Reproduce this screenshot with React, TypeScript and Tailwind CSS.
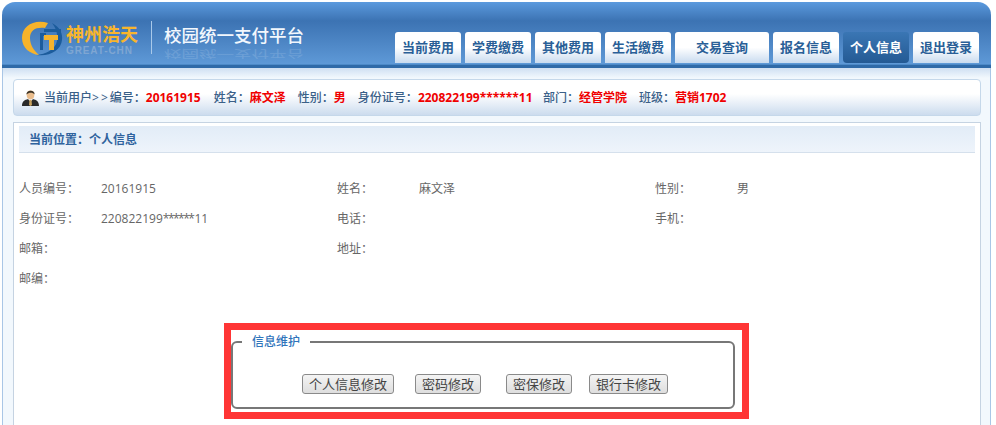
import React from "react";

const tabs = [
  { t: "当前费用", w: "w-[66px]" },
  { t: "学费缴费", w: "w-[66px]" },
  { t: "其他费用", w: "w-[66px]" },
  { t: "生活缴费", w: "w-[66px]" },
  { t: "交易查询", w: "w-[94px]" },
  { t: "报名信息", w: "w-[66px]" },
  { t: "个人信息", w: "w-[66px]", active: true },
  { t: "退出登录", w: "w-[66px]" },
];

const Label = ({ children }: { children: React.ReactNode }) => <span className="text-[#3a6088]">{children}</span>;
const Val = ({ children, w }: { children: React.ReactNode; w: string }) => (
  <span className={`text-[#f00000] font-bold ${w}`}>{children}</span>
);

const idNo = (
  <>
    220822199<span className="tracking-[-1.5px]">******</span>
    <span className="ml-[1px]">11</span>
  </>
);

const rows: React.ReactNode[][] = [
  ["人员编号\uFF1A", "20161915", "姓名\uFF1A", "麻文泽", "性别\uFF1A", "男"],
  ["身份证号\uFF1A", idNo, "电话\uFF1A", "", "手机\uFF1A", ""],
  ["邮箱\uFF1A", "", "地址\uFF1A", "", "", ""],
  ["邮编\uFF1A", "", "", "", "", ""],
];

const Logo = () => (
  <svg width="41" height="37" viewBox="0 0 41 37" className="shrink-0">
    <path d="M30 3 C38 7 41 14 40 20 C39 30 28 37 14 35 C24 34 33 30 35 21 C36 14 34 8 30 3 Z" fill="#1c5c9c" />
    <path d="M22 9 H39 V12 H22 Z" fill="#1c5c9c" />
    <path d="M18 13 V30 H21 V16 H24 V13 Z" fill="#1c5c9c" />
    <path d="M26 3 C12 -1 0 6 0 18 C0 28 8 34 17 35 C11 30 8 24 8 18 C8 10 14 7 23 8 Z" fill="#f6b32b" />
    <path d="M22 15 H36 V20 H32 V30 H27 V20 H22 Z" fill="#f6b32b" />
  </svg>
);

const Avatar = () => (
  <svg width="17" height="17" viewBox="0 0 17 17" className="shrink-0">
    <path d="M0 17 C0 12 3 11 6 10 L8.5 13 L11 10 C14 11 17 12 17 17 Z" fill="#2a2a2a" />
    <path d="M7.5 11 H9.5 L10 16 L8.5 17 L7 16 Z" fill="#c9a25f" />
    <ellipse cx="8.5" cy="6" rx="3.8" ry="4.4" fill="#e9bc8c" />
    <path d="M4.5 5.5 C4 1 13 0 12.6 5.5 C11 3.5 7 3 4.5 5.5 Z" fill="#3a3327" />
  </svg>
);

export default function App() {
  return (
    <div className="h-[425px] w-[996px] overflow-hidden bg-white text-[12px] text-[#333] font-['Open_Sans','Noto_Sans_CJK_SC',sans-serif]">
      <div className="ml-[2px] w-[989px] pt-[2px]">
        <header className="flex h-[66px] items-start rounded-t-[13px] border-b-[3px] border-[#2f6aa8] bg-gradient-to-b from-[#5b9ade] via-[#3c73b3] via-30% to-[#5f9ad8] shadow-[inset_0_-1px_0_#4d8ac8]">
          <div className="flex w-[393px] shrink-0 pl-[20px] pt-[18px]">
            <Logo />
            <div className="ml-[3px] flex w-[74px] shrink-0 flex-col items-start pt-[2px] leading-none">
              <span className="whitespace-nowrap text-[18px] leading-[22px] font-bold text-[#f8b52c] font-['Noto_Sans_CJK_SC',sans-serif]">神州浩天</span>
              <span className="mt-[1px] whitespace-nowrap text-[10px] leading-[11px] font-bold tracking-[0.9px] text-[#7fa6d2] font-['Liberation_Sans',sans-serif]">GREAT-CHN</span>
            </div>
            <div className="ml-[11px] mr-[12px] mt-[1px] h-[33px] w-[1px] shrink-0 bg-[#a9c9ea]" />
            <div className="relative mt-[3px] h-[24px] shrink-0">
              <span className="block whitespace-nowrap text-[17.5px] leading-[24px] font-medium text-[#f2f7fd] font-['Noto_Sans_CJK_SC',sans-serif]">校园统一支付平台</span>
              <span aria-hidden className="absolute left-0 top-0 block origin-bottom -scale-y-60 whitespace-nowrap text-[17.5px] leading-[24px] text-[#eaf3fc] opacity-15 font-['Noto_Sans_CJK_SC',sans-serif]">校园统一支付平台</span>
            </div>
          </div>
          <nav className="mt-[30px] flex gap-[4px]">
            {tabs.map((x) => (
              <div
                key={x.t}
                className={`flex h-[31px] ${x.w} items-center justify-center rounded-t-[3px] pt-[1px] text-[13px] font-bold ${
                  x.active
                    ? "rounded-[4px] bg-gradient-to-b from-[#3a76b4] to-[#245a94] text-white"
                    : "bg-gradient-to-b from-white via-white to-[#c9dbef] text-[#2a5f97]"
                }`}
              >
                {x.t}
              </div>
            ))}
          </nav>
        </header>
        <main className="h-[357px] border-x border-[#a9c6e6] bg-gradient-to-b from-[#cfdff2] via-[#f2f8fd] via-[10px] to-[#f2f8fd] pl-[10px] pr-[9px] pt-[11px]">
          <div className="flex h-[37px] items-center rounded-[4px] border border-[#c5d8ea] bg-gradient-to-b from-white via-white via-40% to-[#ccdcee] pl-[8px] text-[12px] font-medium">
            <Avatar />
            <div className="ml-[5px] flex items-center whitespace-nowrap">
              <Label>当前用户<span className="tracking-[2px]">&gt;&gt;</span>编号{"\uFF1A"}</Label>
              <Val w="w-[68px]">20161915</Val>
              <Label>姓名{"\uFF1A"}</Label>
              <Val w="w-[48px]">麻文泽</Val>
              <Label>性别{"\uFF1A"}</Label>
              <Val w="w-[24px]">男</Val>
              <Label>身份证号{"\uFF1A"}</Label>
              <Val w="w-[125px]">220822199******11</Val>
              <Label>部门{"\uFF1A"}</Label>
              <Val w="w-[60px]">经管学院</Val>
              <Label>班级{"\uFF1A"}</Label>
              <Val w="">营销1702</Val>
            </div>
          </div>
          <section className="mt-[6px] h-[320px] border border-[#c5d3e2] bg-white px-[5px] pt-[3px]">
            <div className="flex h-[27px] items-center border-b border-[#d5e0ec] bg-gradient-to-b from-[#e2ecf7] to-[#eef4fb] pl-[10px] pt-[1px] font-bold text-[#2f639e]">
              当前位置{"\uFF1A"}个人信息
            </div>
            <div className="mt-[21px] text-[#666]">
              {rows.map((r, i) => (
                <div key={i} className="grid h-[30px] grid-cols-[82px_236px_82px_236px_82px_238px] items-center">
                  {r.map((c, j) => (
                    <span key={j} className="whitespace-nowrap">{c}</span>
                  ))}
                </div>
              ))}
            </div>
            <div className="ml-[205px] mt-[29px] w-[525px] border-[7px] border-[#ff3535] bg-white">
              <div className="relative mb-[3px] mt-[11px] h-[68px] w-[504px] rounded-[6px] border-2 border-[#777]">
                <span className="absolute left-[9px] top-[-9px] bg-white px-[10px] leading-[16px] font-medium text-[#2f74bb]">信息维护</span>
                <div className="mt-[31px] flex pl-[69px] text-[13px] text-[#444]">
                  {[
                    ["个人信息修改", "w-[92px]", "mr-[21px]"],
                    ["密码修改", "w-[66px]", "mr-[25px]"],
                    ["密保修改", "w-[66px]", "mr-[17px]"],
                    ["银行卡修改", "w-[79px]", ""],
                  ].map(([t, w, m]) => (
                    <button key={t} className={`h-[20px] ${w} ${m} shrink-0 rounded-[3px] border border-[#8a8a8a] bg-gradient-to-b from-[#f4f4f4] to-[#dedede] leading-[18px]`}>
                      {t}
                    </button>
                  ))}
                </div>
              </div>
            </div>
          </section>
        </main>
      </div>
    </div>
  );
}
